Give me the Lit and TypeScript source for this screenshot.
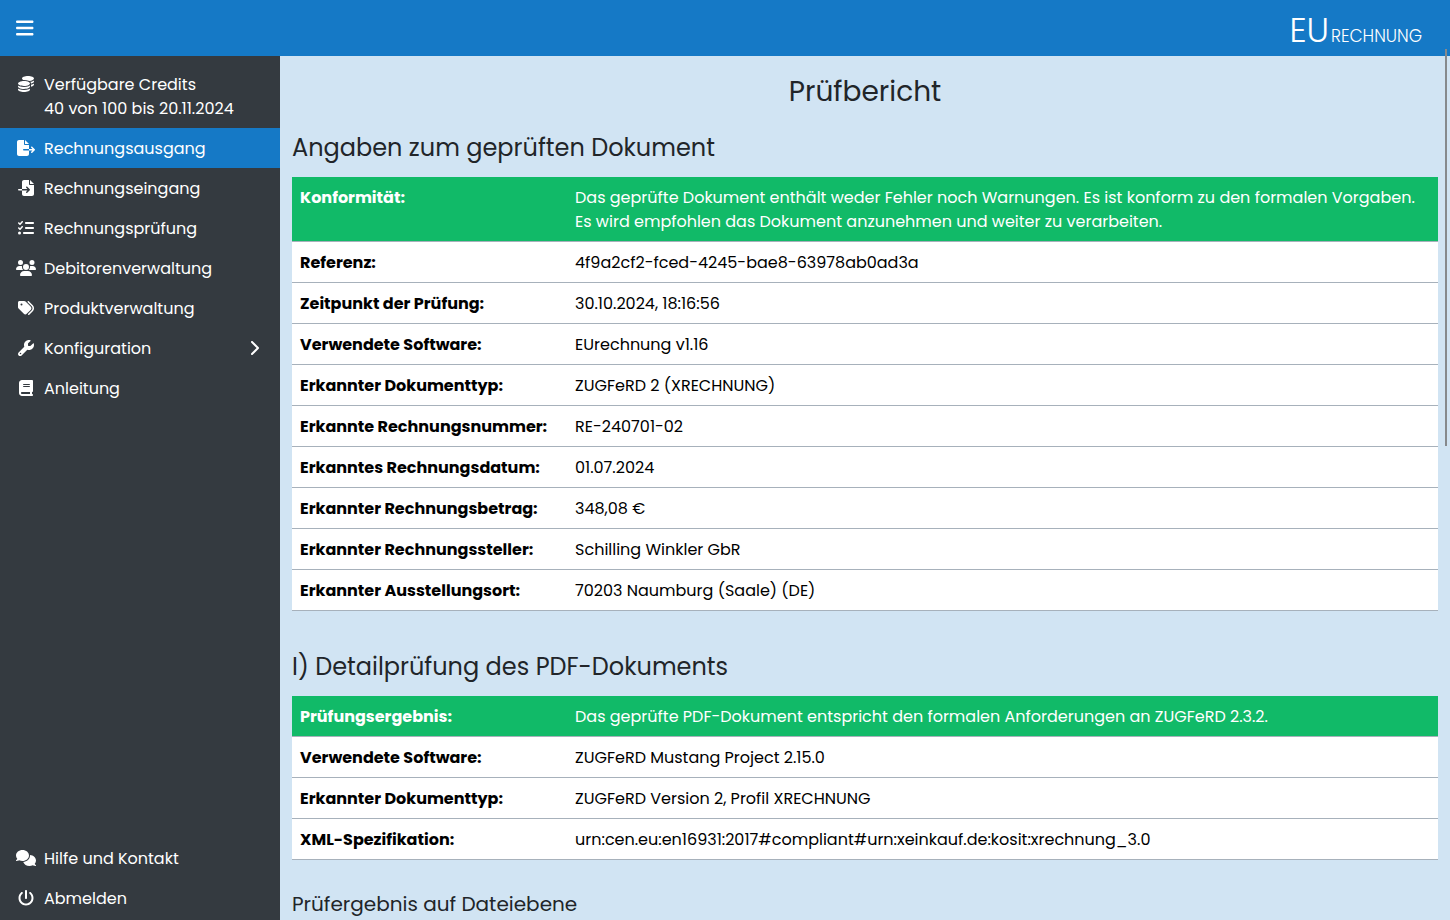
import { LitElement, html, css, svg } from "lit";
import { customElement, property } from "lit/decorators.js";
import { classMap } from "lit/directives/class-map.js";

/* Solid glyphs: [view box width, path]; every glyph is 512 units high. */
const ICONS: Record<string, [number, string]> = {
  bars: [448, "M0 96C0 78.3 14.3 64 32 64H416c17.7 0 32 14.3 32 32s-14.3 32-32 32H32C14.3 128 0 113.7 0 96zM0 256c0-17.7 14.3-32 32-32H416c17.7 0 32 14.3 32 32s-14.3 32-32 32H32c-17.7 0-32-14.3-32-32zM448 416c0 17.7-14.3 32-32 32H32c-17.7 0-32-14.3-32-32s14.3-32 32-32H416c17.7 0 32 14.3 32 32z"],
  coins: [512, "M512 80c0 18-14.3 34.6-38.4 48c-29.1 16.1-72.5 27.5-122.3 30.9c-3.7-1.8-7.4-3.5-11.3-5C300.6 137.4 248.2 128 192 128c-8.3 0-16.4 .2-24.5 .6l-1.1-.6C142.3 114.6 128 98 128 80c0-44.2 86-80 192-80S512 35.8 512 80zM160.7 161.1c10.2-.7 20.7-1.1 31.3-1.1c62.2 0 117.4 12.3 152.5 31.4C369.3 204.9 384 221.7 384 240c0 4-.7 7.9-2.1 11.7c-4.6 13.2-17 25.3-35 35.5c0 0 0 0 0 0c-.1 .1-.3 .1-.4 .2l0 0 0 0c-.3 .2-.6 .3-.9 .5c-35 19.4-90.8 32-153.6 32c-59.6 0-112.9-11.3-148.2-29.1c-1.9-.9-3.7-1.9-5.5-2.9C14.3 274.6 0 258 0 240c0-34.8 53.4-64.5 128-75.4c10.5-1.5 21.4-2.7 32.7-3.5zM416 240c0-21.9-10.6-39.9-24.1-53.4c28.3-4.4 54.2-11.4 76.2-20.5c16.3-6.8 31.5-15.2 43.9-25.5V176c0 19.3-16.5 37.1-43.8 50.9c-14.6 7.4-32.4 13.7-52.4 18.5c.1-1.8 .2-3.5 .2-5.3zm-32 96c0 18-14.3 34.6-38.4 48c-1.8 1-3.6 1.9-5.5 2.9C304.9 404.7 251.6 416 192 416c-62.8 0-118.6-12.6-153.6-32C14.3 370.6 0 354 0 336V300.6c12.5 10.3 27.6 18.7 43.9 25.5C83.4 342.6 135.8 352 192 352s108.6-9.4 148.1-25.9c7.8-3.2 15.3-6.9 22.4-10.9c6.1-3.4 11.8-7.2 17.2-11.2c1.5-1.1 2.9-2.3 4.3-3.4V304v5.7V336zm32 0V304 278.1c19-4.2 36.5-9.5 52.1-16c16.3-6.8 31.5-15.2 43.9-25.5V272c0 10.5-5 21-14.9 30.9c-16.3 16.3-45 29.7-81.3 38.4c.1-1.7 .2-3.5 .2-5.3zM192 448c56.2 0 108.6-9.4 148.1-25.9c16.3-6.8 31.5-15.2 43.9-25.5V432c0 44.2-86 80-192 80S0 476.2 0 432V396.6c12.5 10.3 27.6 18.7 43.9 25.5C83.4 438.6 135.8 448 192 448z"],
  fileExport: [576, "M0 64C0 28.7 28.7 0 64 0H224V128c0 17.7 14.3 32 32 32H384V288H216c-13.3 0-24 10.7-24 24s10.7 24 24 24H384V448c0 35.3-28.7 64-64 64H64c-35.3 0-64-28.7-64-64V64zM384 336V288H494.1l-39-39c-9.4-9.4-9.4-24.6 0-33.9s24.6-9.4 33.9 0l80 80c9.4 9.4 9.4 24.6 0 33.9l-80 80c-9.4 9.4-24.6 9.4-33.9 0s-9.4-24.6 0-33.9l39-39H384zm0-208H256V0L384 128z"],
  fileImport: [512, "M128 64c0-35.3 28.7-64 64-64H352V128c0 17.7 14.3 32 32 32H512V448c0 35.3-28.7 64-64 64H192c-35.3 0-64-28.7-64-64V336H302.1l-39 39c-9.4 9.4-9.4 24.6 0 33.9s24.6 9.4 33.9 0l80-80c9.4-9.4 9.4-24.6 0-33.9l-80-80c-9.4-9.4-24.6-9.4-33.9 0s-9.4 24.6 0 33.9l39 39H128V64zm0 224v48H24c-13.3 0-24-10.7-24-24s10.7-24 24-24H128zM512 128H384V0L512 128z"],
  listCheck: [512, "M152.1 38.2c9.9 8.9 10.7 24 1.8 33.9l-72 80c-4.4 4.9-10.6 7.8-17.2 7.9s-12.9-2.4-17.6-7L7 113C-2.3 103.6-2.3 88.4 7 79s24.6-9.4 33.9 0l22.1 22.1 55.1-61.2c8.9-9.9 24-10.7 33.9-1.8zm0 160c9.9 8.9 10.7 24 1.8 33.9l-72 80c-4.4 4.9-10.6 7.8-17.2 7.9s-12.9-2.4-17.6-7L7 273c-9.4-9.4-9.4-24.6 0-33.9s24.6-9.4 33.9 0l22.1 22.1 55.1-61.2c8.9-9.9 24-10.7 33.9-1.8zM224 96c0-17.7 14.3-32 32-32H480c17.7 0 32 14.3 32 32s-14.3 32-32 32H256c-17.7 0-32-14.3-32-32zm0 160c0-17.7 14.3-32 32-32H480c17.7 0 32 14.3 32 32s-14.3 32-32 32H256c-17.7 0-32-14.3-32-32zM160 416c0-17.7 14.3-32 32-32H480c17.7 0 32 14.3 32 32s-14.3 32-32 32H192c-17.7 0-32-14.3-32-32zM48 368a48 48 0 1 1 0 96 48 48 0 1 1 0-96z"],
  users: [640, "M144 0a80 80 0 1 1 0 160A80 80 0 1 1 144 0zM512 0a80 80 0 1 1 0 160A80 80 0 1 1 512 0zM0 298.7C0 239.8 47.8 192 106.7 192h42.7c15.9 0 31 3.5 44.6 9.7c-1.3 7.2-1.9 14.7-1.9 22.3c0 38.2 16.8 72.5 43.3 96c-.2 0-.4 0-.7 0H21.3C9.6 320 0 310.4 0 298.7zM405.3 320c-.2 0-.4 0-.7 0c26.6-23.5 43.3-57.8 43.3-96c0-7.6-.7-15-1.9-22.3c13.6-6.3 28.7-9.7 44.6-9.7h42.7C592.2 192 640 239.8 640 298.7c0 11.8-9.6 21.3-21.3 21.3H405.3zM224 224a96 96 0 1 1 192 0 96 96 0 1 1 -192 0zM128 485.3C128 411.7 187.7 352 261.3 352H378.7C452.3 352 512 411.7 512 485.3c0 14.7-11.9 26.7-26.7 26.7H154.7c-14.7 0-26.7-11.9-26.7-26.7z"],
  tags: [512, "M345 39.1L472.8 168.4c52.4 53 52.4 138.2 0 191.2L360.8 472.9c-9.3 9.4-24.5 9.5-33.9 .2s-9.5-24.5-.2-33.9L438.6 325.9c33.9-34.3 33.9-89.4 0-123.7L310.9 72.9c-9.3-9.4-9.2-24.6 .2-33.9s24.6-9.2 33.9 .2zM0 229.5V80C0 53.5 21.5 32 48 32H197.5c17 0 33.3 6.7 45.3 18.7l168 168c25 25 25 65.5 0 90.5L277.3 442.7c-25 25-65.5 25-90.5 0l-168-168C6.7 262.7 0 246.5 0 229.5zM144 144a32 32 0 1 0 -64 0 32 32 0 1 0 64 0z"],
  wrench: [512, "M352 320c88.4 0 160-71.6 160-160c0-15.3-2.2-30.1-6.2-44.2c-3.1-10.8-16.4-13.2-24.3-5.3l-76.8 76.8c-3 3-7.1 4.7-11.3 4.7H336c-8.8 0-16-7.2-16-16V118.6c0-4.2 1.7-8.3 4.7-11.3l76.8-76.8c7.9-7.9 5.4-21.2-5.3-24.3C382.1 2.2 367.3 0 352 0C263.6 0 192 71.6 192 160c0 19.1 3.4 37.5 9.5 54.5L19.9 396.1C7.2 408.8 0 426.1 0 444.1C0 481.6 30.4 512 67.9 512c18 0 35.3-7.2 48-19.9L297.5 310.5c17 6.2 35.4 9.5 54.5 9.5zM80 408a24 24 0 1 1 0 48 24 24 0 1 1 0-48z"],
  book: [448, "M96 0C43 0 0 43 0 96V416c0 53 43 96 96 96H384h32c17.7 0 32-14.3 32-32s-14.3-32-32-32V384c17.7 0 32-14.3 32-32V32c0-17.7-14.3-32-32-32H384 96zm0 384H352v64H96c-17.7 0-32-14.3-32-32s14.3-32 32-32zm32-240c0-8.8 7.2-16 16-16H336c8.8 0 16 7.2 16 16s-7.2 16-16 16H144c-8.8 0-16-7.2-16-16zm16 48H336c8.8 0 16 7.2 16 16s-7.2 16-16 16H144c-8.8 0-16-7.2-16-16s7.2-16 16-16z"],
  comments: [640, "M208 352c114.9 0 208-78.8 208-176S322.9 0 208 0S0 78.8 0 176c0 38.6 14.7 74.3 39.6 103.4c-3.5 9.4-8.7 17.7-14.2 24.7c-4.8 6.2-9.7 11-13.3 14.3c-1.8 1.6-3.3 2.9-4.3 3.7c-.5 .4-.9 .7-1.1 .8l-.2 .2C1 327.2-1.4 334.4 .8 340.9S9.1 352 16 352c21.8 0 43.8-5.6 62.1-12.5c9.2-3.5 17.8-7.4 25.2-11.4C134.1 343.3 169.8 352 208 352zM448 176c0 112.3-99.1 196.9-216.5 207C255.8 457.4 336.4 512 432 512c38.2 0 73.9-8.7 104.7-23.9c7.5 4 16 7.9 25.2 11.4c18.3 6.9 40.3 12.5 62.1 12.5c6.9 0 13.1-4.5 15.2-11.1c2.1-6.6-.2-13.8-5.8-17.9l-.2-.2c-.2-.2-.6-.4-1.1-.8c-1-.8-2.5-2-4.3-3.7c-3.6-3.3-8.5-8.1-13.3-14.3c-5.5-7-10.7-15.4-14.2-24.7c24.9-29 39.6-64.7 39.6-103.4c0-92.8-84.9-168.9-192.6-175.5c.4 5.1 .6 10.3 .6 15.5z"],
  power: [512, "M288 32c0-17.7-14.3-32-32-32s-32 14.3-32 32V256c0 17.7 14.3 32 32 32s32-14.3 32-32V32zM143.5 120.6c13.6-11.3 15.4-31.5 4.1-45.1s-31.5-15.4-45.1-4.1C49.7 115.4 16 181.8 16 256c0 132.5 107.5 240 240 240s240-107.5 240-240c0-74.2-33.8-140.6-86.6-184.6c-13.6-11.3-33.8-9.4-45.1 4.1s-9.4 33.8 4.1 45.1c38.9 32.3 63.5 81 63.5 135.4c0 97.2-78.8 176-176 176s-176-78.8-176-176c0-54.4 24.7-103.1 63.5-135.4z"],
  chevron: [320, "M310.6 233.4c12.5 12.5 12.5 32.8 0 45.3l-192 192c-12.5 12.5-32.8 12.5-45.3 0s-12.5-32.8 0-45.3L242.7 256 73.4 86.6c-12.5-12.5-12.5-32.8 0-45.3s32.8-12.5 45.3 0l192 192z"],
};

interface NavItem {
  icon: string;
  label: string;
  note?: string;
  active?: boolean;
  expandable?: boolean;
}

interface ReportRow {
  label: string;
  lines: string[];
  ok?: boolean;
}

const MAIN_NAV: NavItem[] = [
  { icon: "coins", label: "Verfügbare Credits", note: "40 von 100 bis 20.11.2024" },
  { icon: "fileExport", label: "Rechnungsausgang", active: true },
  { icon: "fileImport", label: "Rechnungseingang" },
  { icon: "listCheck", label: "Rechnungsprüfung" },
  { icon: "users", label: "Debitorenverwaltung" },
  { icon: "tags", label: "Produktverwaltung" },
  { icon: "wrench", label: "Konfiguration", expandable: true },
  { icon: "book", label: "Anleitung" },
];

const FOOT_NAV: NavItem[] = [
  { icon: "comments", label: "Hilfe und Kontakt" },
  { icon: "power", label: "Abmelden" },
];

const DOCUMENT_ROWS: ReportRow[] = [
  {
    label: "Konformität:",
    lines: [
      "Das geprüfte Dokument enthält weder Fehler noch Warnungen. Es ist konform zu den formalen Vorgaben.",
      "Es wird empfohlen das Dokument anzunehmen und weiter zu verarbeiten.",
    ],
    ok: true,
  },
  { label: "Referenz:", lines: ["4f9a2cf2-fced-4245-bae8-63978ab0ad3a"] },
  { label: "Zeitpunkt der Prüfung:", lines: ["30.10.2024, 18:16:56"] },
  { label: "Verwendete Software:", lines: ["EUrechnung v1.16"] },
  { label: "Erkannter Dokumenttyp:", lines: ["ZUGFeRD 2 (XRECHNUNG)"] },
  { label: "Erkannte Rechnungsnummer:", lines: ["RE-240701-02"] },
  { label: "Erkanntes Rechnungsdatum:", lines: ["01.07.2024"] },
  { label: "Erkannter Rechnungsbetrag:", lines: ["348,08 €"] },
  { label: "Erkannter Rechnungssteller:", lines: ["Schilling Winkler GbR"] },
  { label: "Erkannter Ausstellungsort:", lines: ["70203 Naumburg (Saale) (DE)"] },
];

const PDF_ROWS: ReportRow[] = [
  {
    label: "Prüfungsergebnis:",
    lines: ["Das geprüfte PDF-Dokument entspricht den formalen Anforderungen an ZUGFeRD 2.3.2."],
    ok: true,
  },
  { label: "Verwendete Software:", lines: ["ZUGFeRD Mustang Project 2.15.0"] },
  { label: "Erkannter Dokumenttyp:", lines: ["ZUGFeRD Version 2, Profil XRECHNUNG"] },
  { label: "XML-Spezifikation:", lines: ["urn:cen.eu:en16931:2017#compliant#urn:xeinkauf.de:kosit:xrechnung_3.0"] },
];

@customElement("app-icon")
export class AppIcon extends LitElement {
  static styles = css`
    :host {
      display: inline-flex;
      height: 1em;
    }
    .glyph {
      display: block;
      height: 1em;
      fill: currentColor;
    }
  `;

  @property() name = "bars";

  render() {
    const [width, path] = ICONS[this.name];
    return html`<svg class="glyph" viewBox="0 0 ${width} 512" aria-hidden="true">
      ${svg`<path d=${path}></path>`}
    </svg>`;
  }
}

@customElement("side-nav")
export class SideNav extends LitElement {
  static styles = css`
    :host {
      display: flex;
      flex-direction: column;
      justify-content: space-between;
      box-sizing: border-box;
      padding: 8px 0 2px;
      background: #343a40;
    }
    .list {
      margin: 0;
      padding: 0;
      list-style: none;
    }
    .link {
      display: flex;
      align-items: flex-start;
      gap: 8px;
      padding: 9px 16px 7px;
      color: #fff;
      line-height: 24px;
      text-decoration: none;
    }
    .active {
      background: #1579c6;
    }
    .icon {
      flex: none;
      justify-content: center;
      width: 20px;
      padding: 3px 0;
    }
    .text {
      flex: 1;
      white-space: nowrap;
    }
    .note {
      display: block;
    }
    .arrow {
      padding: 3px 5px;
    }
  `;

  private entry(item: NavItem) {
    return html`<li>
      <a class=${classMap({ link: true, active: !!item.active })} href="#">
        <app-icon class="icon" name=${item.icon}></app-icon>
        <span class="text">${item.label}${item.note ? html`<span class="note">${item.note}</span>` : ""}</span>
        ${item.expandable ? html`<app-icon class="arrow" name="chevron"></app-icon>` : ""}
      </a>
    </li>`;
  }

  render() {
    return html`
      <ul class="list">${MAIN_NAV.map((item) => this.entry(item))}</ul>
      <ul class="list">${FOOT_NAV.map((item) => this.entry(item))}</ul>
    `;
  }
}

@customElement("report-table")
export class ReportTable extends LitElement {
  static styles = css`
    :host {
      display: block;
    }
    .table {
      width: 100%;
      border-collapse: separate;
      border-spacing: 0;
      background: #fff;
      color: #000;
      line-height: 24px;
    }
    .label,
    .value {
      padding: 9px 8px 7px;
      border-bottom: 1px solid #a7b1bb;
      text-align: left;
      vertical-align: top;
    }
    .label {
      box-sizing: border-box;
      width: 24%;
      font-weight: 700;
      white-space: nowrap;
    }
    .value {
      font-weight: 400;
    }
    .line {
      display: block;
    }
    .ok {
      background: #11ba68;
      color: #fff;
    }
  `;

  @property({ attribute: false }) rows: ReportRow[] = [];

  render() {
    return html`<table class="table">
      <tbody>
        ${this.rows.map(
          (row) => html`<tr class=${classMap({ ok: !!row.ok })}>
            <th class="label" scope="row">${row.label}</th>
            <td class="value">${row.lines.map((line) => html`<span class="line">${line}</span>`)}</td>
          </tr>`
        )}
      </tbody>
    </table>`;
  }
}

@customElement("app-root")
export class AppRoot extends LitElement {
  static styles = css`
    :host {
      display: grid;
      grid-template: 56px minmax(0, 1fr) / 280px minmax(0, 1fr);
      position: relative;
      height: 100vh;
      font: 400 16px/24px Poppins, Inter, "Open Sans", sans-serif;
      color: #212529;
      background: #d1e4f3;
    }
    .topbar {
      grid-column: 1 / -1;
      display: flex;
      align-items: center;
      justify-content: space-between;
      padding: 0 28px 0 16px;
      background: #1579c6;
      color: #fff;
    }
    .toggle {
      display: flex;
      padding: 0 0 1px;
      border: 0;
      background: none;
      color: inherit;
      font-size: 20px;
      cursor: pointer;
    }
    .brand {
      display: flex;
      align-items: baseline;
      gap: 2px;
      padding-top: 10px;
      color: inherit;
      font-size: 17px;
      font-weight: 300;
      line-height: 46px;
      text-decoration: none;
    }
    .brand-lead {
      font-size: 34px;
    }
    .content {
      padding: 18px 12px;
      overflow-y: auto;
      scrollbar-width: none;
    }
    .title,
    .section,
    .subsection {
      margin: 0;
      font-weight: 400;
    }
    .title {
      font-size: 28px;
      line-height: 36px;
      text-align: center;
    }
    .section {
      padding: 23px 0 14px;
      font-size: 24px;
      line-height: 30px;
    }
    .report + .section {
      padding-top: 41px;
    }
    .subsection {
      padding: 32px 0 16px;
      font-size: 20px;
      line-height: 24px;
    }
    .thumb {
      position: absolute;
      top: 49px;
      right: 3px;
      width: 2px;
      height: 397px;
      background: #86898c;
    }
  `;

  render() {
    return html`
      <header class="topbar">
        <button class="toggle" type="button" aria-label="Menü"><app-icon name="bars"></app-icon></button>
        <a class="brand" href="#"><span class="brand-lead">EU</span><span>RECHNUNG</span></a>
      </header>
      <side-nav></side-nav>
      <main class="content">
        <h1 class="title">Prüfbericht</h1>
        <h2 class="section">Angaben zum geprüften Dokument</h2>
        <report-table class="report" .rows=${DOCUMENT_ROWS}></report-table>
        <h2 class="section">I) Detailprüfung des PDF-Dokuments</h2>
        <report-table class="report" .rows=${PDF_ROWS}></report-table>
        <h3 class="subsection">Prüfergebnis auf Dateiebene</h3>
      </main>
      <div class="thumb"></div>
    `;
  }
}
